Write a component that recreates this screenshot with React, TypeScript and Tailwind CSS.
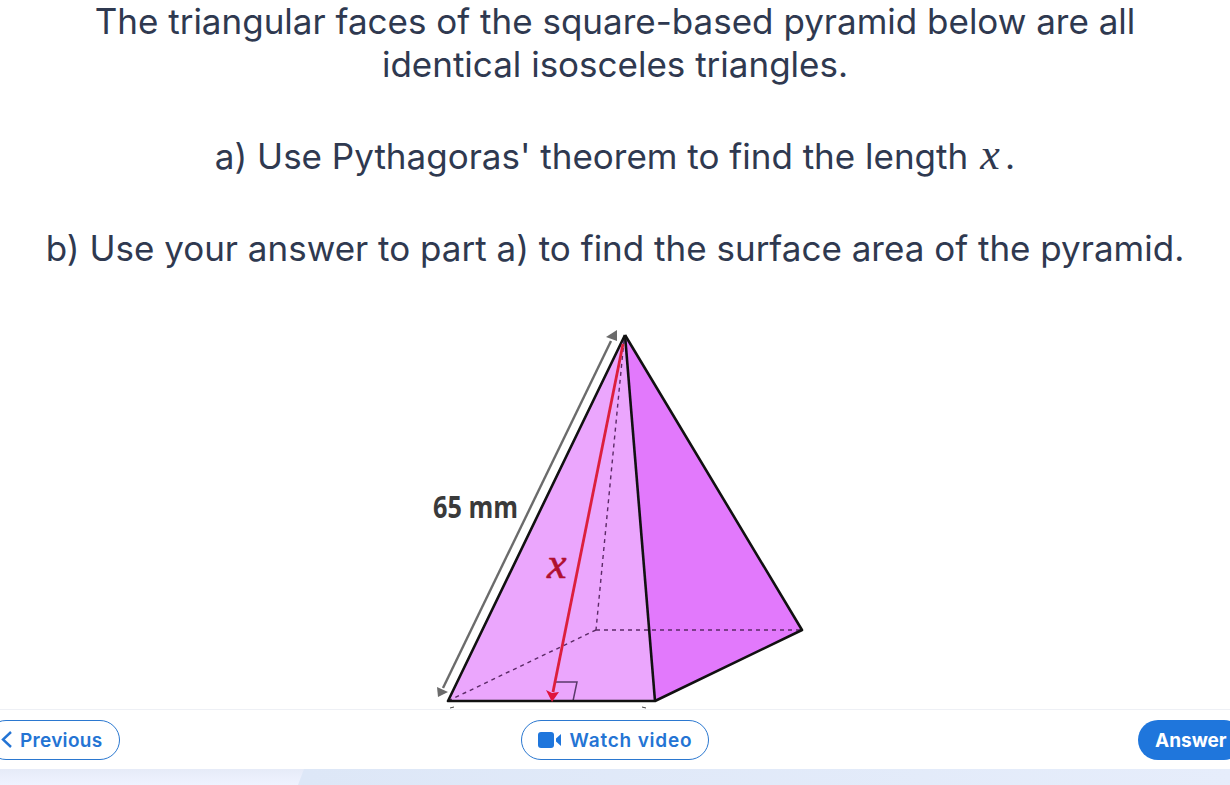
const Pyramid = () => {
  return (
    <svg width="380" height="384" viewBox="430 325 380 384" className="ml-[430px] shrink-0">
      {/* faces */}
      <polygon points="625,335 448,701 655,701" fill="#eba6fd" />
      <polygon points="625,335 655,701 802,630" fill="#e279fc" />

      {/* hidden edges */}
      <g fill="none" stroke="#5b2a66" strokeWidth="1.4" strokeDasharray="4 4">
        <path d="M624,340 L596,630" />
        <path d="M596,630 L802,630" />
        <path d="M596,630 L450,700" />
      </g>

      {/* right angle */}
      <path d="M555,682 L577,682 L573,701" fill="none" stroke="#5b3a6b" strokeWidth="1.5" />

      {/* edges */}
      <g fill="none" stroke="#111" strokeWidth="2.6" strokeLinejoin="round">
        <path d="M625,335 L448,701 L655,701 L802,630 L625,335" />
        <path d="M625,335 L655,701" />
      </g>

      {/* 65 mm arrow */}
      <path d="M611,341 L443,688" stroke="#6b6b6b" strokeWidth="2.4" fill="none" />
      <polygon points="617,330 606,337 617,341" fill="#6b6b6b" />
      <polygon points="438,697 437,687 448,692" fill="#6b6b6b" />

      {/* x arrow */}
      <path d="M623,344 L553,692" stroke="#dc1f3c" strokeWidth="2.8" fill="none" />
      <polygon points="552,702 546,690 552,693 559,692" fill="#e0143c" />

      {/* clipped marks under the base */}
      <path d="M450,708 L454,707" stroke="#444" strokeWidth="1" />
      <path d="M642,707 L646,708" stroke="#444" strokeWidth="1" />

      <text x="433" y="518" fontFamily="'Open Sans', sans-serif" fontWeight="700" fontSize="31" fill="#3a3a3a" textLength="85" lengthAdjust="spacingAndGlyphs">
        65 mm
      </text>
      <text x="547" y="578" fontFamily="'Liberation Serif', serif" fontStyle="italic" fontSize="44" stroke="#b01030" strokeWidth="0.6" fill="#b01030">
        x
      </text>
    </svg>
  );
};

const App = () => {
  return (
    <div className="w-[1230px] h-[785px] overflow-hidden bg-white flex flex-col font-['Inter',sans-serif] text-[#2f3950]">
      {/* Question */}
      <div className="h-[709px] shrink-0 flex flex-col overflow-hidden">
        <div className="text-center text-[35px] leading-[43px]">
          <p>The triangular faces of the square-based pyramid below are all</p>
          <p>identical isosceles triangles.</p>
          <p className="mt-[47px]">
            a) Use Pythagoras' theorem to find the length{" "}
            <span className="inline-block w-[24px] mr-[3px] font-['Liberation_Serif',serif] italic text-[44px] leading-none">x</span>.
          </p>
          <p className="mt-[49px]">b) Use your answer to part a) to find the surface area of the pyramid.</p>
        </div>
        <div className="mt-[55px]">
          <Pyramid />
        </div>
      </div>

      {/* Footer nav */}
      <div className="h-[60px] shrink-0 border-t border-[#eef0f5] grid grid-cols-3 items-center">
        <button className="justify-self-start -ml-[14px] w-[134px] h-10 pl-[13px] rounded-full border border-[#2b78d0] flex items-center gap-2 text-[#2474d4] text-[19px] font-semibold tracking-[0.3px]">
          <svg width="12" height="17" viewBox="0 0 12 17" fill="none" stroke="#2474d4" strokeWidth="2.4">
            <path d="M11,1 L3,8.5 L11,16" />
          </svg>
          <span className="pt-[3px]">Previous</span>
        </button>
        <button className="justify-self-center w-[188px] h-10 rounded-full border border-[#2b78d0] flex items-center justify-center gap-2 text-[#2474d4] text-[19px] font-semibold tracking-[0.8px]">
          <svg width="24" height="16" viewBox="0 0 24 16" fill="#1f76dc">
            <rect x="0" y="0" width="16" height="16" rx="3" />
            <path d="M18,6.5 L23,2 L23,14 L18,9.5 Z" />
          </svg>
          <span className="pt-[3px]">Watch video</span>
        </button>
        <button className="justify-self-end -mr-[14px] w-[106px] h-10 pl-[17px] rounded-full bg-[#1f76dc] flex items-center text-white text-[19px] font-bold">
          <span className="pt-[3px]">Answer</span>
        </button>
      </div>

      {/* Bottom band */}
      <div className="flex-1 flex bg-gradient-to-b from-[#e6ebf8] to-[#eff3ff]">
        <div className="ml-[298px] flex-1 bg-gradient-to-r from-[#dde7f7] to-[#e6edfb] [clip-path:polygon(6px_0,100%_0,100%_100%,0_100%)]" />
      </div>
    </div>
  );
};

export default App;
